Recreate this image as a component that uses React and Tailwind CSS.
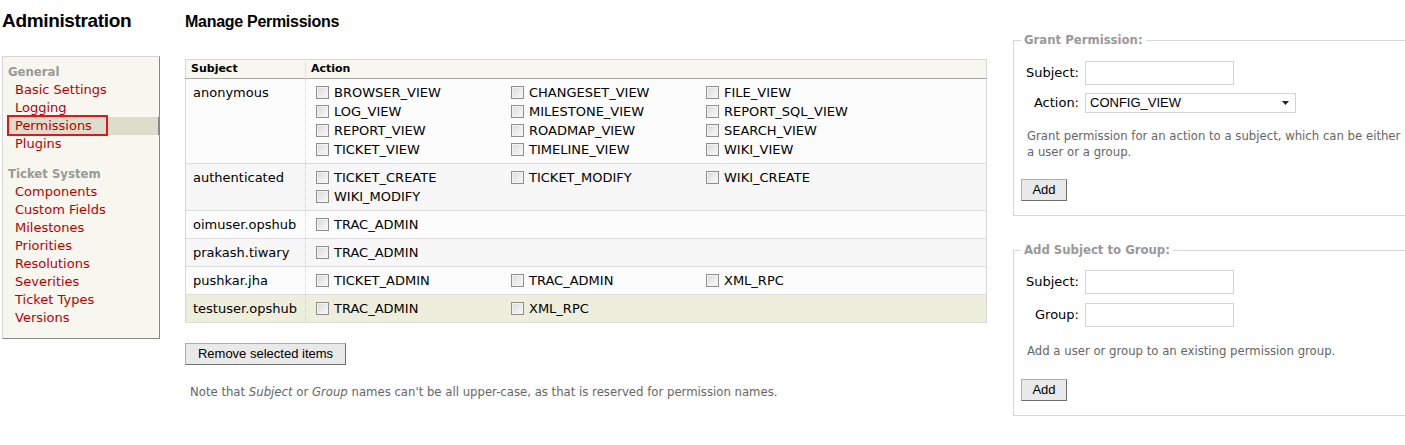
import React from "react";

const general = ["Basic Settings", "Logging", "Permissions", "Plugins"];
const ticketSystem = [
  "Components",
  "Custom Fields",
  "Milestones",
  "Priorities",
  "Resolutions",
  "Severities",
  "Ticket Types",
  "Versions",
];

const perms = [
  {
    subject: "anonymous",
    actions: [
      "BROWSER_VIEW",
      "CHANGESET_VIEW",
      "FILE_VIEW",
      "LOG_VIEW",
      "MILESTONE_VIEW",
      "REPORT_SQL_VIEW",
      "REPORT_VIEW",
      "ROADMAP_VIEW",
      "SEARCH_VIEW",
      "TICKET_VIEW",
      "TIMELINE_VIEW",
      "WIKI_VIEW",
    ],
    bg: "bg-[#fcfcfc]",
  },
  {
    subject: "authenticated",
    actions: ["TICKET_CREATE", "TICKET_MODIFY", "WIKI_CREATE", "WIKI_MODIFY"],
    bg: "bg-[#f7f7f7]",
  },
  { subject: "oimuser.opshub", actions: ["TRAC_ADMIN"], bg: "bg-[#fcfcfc]" },
  { subject: "prakash.tiwary", actions: ["TRAC_ADMIN"], bg: "bg-[#f7f7f7]" },
  {
    subject: "pushkar.jha",
    actions: ["TICKET_ADMIN", "TRAC_ADMIN", "XML_RPC"],
    bg: "bg-[#fcfcfc]",
  },
  {
    subject: "testuser.opshub",
    actions: ["TRAC_ADMIN", "XML_RPC"],
    bg: "bg-[#eeeedd]",
  },
];

const Checkbox = () => (
  <span className="inline-block w-[13px] h-[13px] shrink-0 border border-[#8f8f8f] bg-linear-to-br from-[#d9d9d9] to-[#fbfbfb] shadow-[inset_0_0_0_1px_#f2f2f2]" />
);

const Button = ({ children, className = "" }) => (
  <button
    className={`h-[22px] bg-[#e9e9e9] border border-[#adadad] border-r-[#707070] border-b-[#707070] font-['Liberation_Sans',Arial,sans-serif] text-[13px] leading-[20px] text-black ${className}`}
  >
    {children}
  </button>
);

const Label = ({ children }) => (
  <span className="w-[58px] text-right text-[13px] text-black">{children}</span>
);

const TextInput = () => (
  <div className="ml-[6px] w-[149px] h-[24px] border border-[#d4d4d4] bg-white" />
);

export default function App() {
  return (
    <div className="w-[1405px] h-[445px] overflow-hidden bg-white flex font-['DejaVu_Sans',Verdana,sans-serif] text-[13px] text-black">
      {/* left nav */}
      <div className="w-[185px] shrink-0">
        <h1 className="mt-[10px] pl-[2px] font-['Liberation_Sans',Arial,sans-serif] font-bold text-[19px] leading-[22px] tracking-[-0.018em]">
          Administration
        </h1>
        <div className="mt-[24px] ml-[2px] w-[158px] bg-[#f7f7f0] border border-[#d7d7d7] border-r-[#888] border-b-[#888] pt-[7px] pb-[11px] pl-[5px]">
          <div className="h-[17px] leading-[17px] text-[11.7px] font-bold text-[#999]">
            General
          </div>
          <ul>
            {general.map((item) => (
              <li
                key={item}
                className={`relative h-[18px] leading-[18px] pl-[7px] text-[#bb0000] ${
                  item === "Permissions" ? "bg-[#ddddcc] border-r border-[#888]" : ""
                }`}
              >
                {item}
                {item === "Permissions" && (
                  <span className="absolute -left-[1px] -top-[2px] w-[101px] h-[21px] border-2 border-[#e3141c]" />
                )}
              </li>
            ))}
          </ul>
          <div className="mt-[13px] h-[17px] leading-[17px] text-[11.7px] font-bold text-[#999]">
            Ticket System
          </div>
          <ul>
            {ticketSystem.map((item) => (
              <li key={item} className="h-[18px] leading-[18px] pl-[7px] text-[#bb0000]">
                {item}
              </li>
            ))}
          </ul>
        </div>
      </div>

      {/* main */}
      <div className="w-[802px] shrink-0">
        <h2 className="mt-[12px] font-['Liberation_Sans',Arial,sans-serif] font-bold text-[16px] leading-[19px] tracking-[-0.018em]">
          Manage Permissions
        </h2>
        <table className="mt-[28px] w-[802px] border-collapse border border-[#d7d7d7]">
          <thead>
            <tr className="bg-[#f7f7f0] border-b border-[#a8a8a8]">
              <th className="w-[120px] h-[19px] pl-[5px] text-left text-[11px] font-bold leading-[14px]">
                Subject
              </th>
              <th className="pl-[5px] text-left text-[11px] font-bold leading-[14px] border-l border-[#e2e2e2]">
                Action
              </th>
            </tr>
          </thead>
          <tbody>
            {perms.map((row) => (
              <tr key={row.subject} className={`${row.bg} border-b border-[#dddddd]`}>
                <td className="align-top py-[4px] pl-[7px] leading-[19px]">{row.subject}</td>
                <td className="align-top py-[4px] pl-[10px] leading-[19px] border-l border-dotted border-[#d0d0d0]">
                  <div className="flex flex-wrap">
                    {row.actions.map((a) => (
                      <div key={a} className="w-[195px] h-[19px] flex items-center gap-[5px]">
                        <Checkbox />
                        <span>{a}</span>
                      </div>
                    ))}
                  </div>
                </td>
              </tr>
            ))}
          </tbody>
        </table>
        <Button className="mt-[20px] w-[161px]">Remove selected items</Button>
        <p className="mt-[19px] ml-[5px] text-[11.7px] leading-[16px] text-[#666]">
          Note that <em>Subject</em> or <em>Group</em> names can't be all upper-case, as that is
          reserved for permission names.
        </p>
      </div>

      {/* right forms */}
      <div className="ml-[26px] pt-[32px] shrink-0">
        <fieldset className="w-[400px] border border-[#d7d7d7] px-[7px] pt-[12px] pb-[14px]">
          <legend className="px-[3px] text-[11.7px] leading-[16px] font-bold text-[#999]">
            Grant Permission:
          </legend>
          <div className="flex items-center h-[25px]">
            <Label>Subject:</Label>
            <TextInput />
          </div>
          <div className="flex items-center h-[21px] mt-[7px]">
            <Label>Action:</Label>
            <div className="ml-[6px] w-[211px] h-[20px] border border-[#d4d4d4] bg-white flex items-center justify-between pl-[4px] pr-[6px] font-['Liberation_Sans',Arial,sans-serif] text-[13px]">
              <span>CONFIG_VIEW</span>
              <svg width="7" height="4" viewBox="0 0 7 4">
                <path d="M0 0h7L3.5 4z" fill="#222" />
              </svg>
            </div>
          </div>
          <p className="mt-[15px] ml-[6px] text-[11.7px] leading-[16px] text-[#666] whitespace-nowrap">
            Grant permission for an action to a subject, which can be either
            <br />a user or a group.
          </p>
          <Button className="mt-[19px] w-[46px]">Add</Button>
        </fieldset>

        <fieldset className="mt-[26px] w-[400px] border border-[#d7d7d7] px-[7px] pt-[12px] pb-[14px]">
          <legend className="px-[3px] text-[11.7px] leading-[16px] font-bold text-[#999]">
            Add Subject to Group:
          </legend>
          <div className="flex items-center h-[24px]">
            <Label>Subject:</Label>
            <TextInput />
          </div>
          <div className="flex items-center h-[24px] mt-[9px]">
            <Label>Group:</Label>
            <TextInput />
          </div>
          <p className="mt-[16px] ml-[6px] text-[11.7px] leading-[16px] text-[#666]">
            Add a user or group to an existing permission group.
          </p>
          <Button className="mt-[20px] w-[46px]">Add</Button>
        </fieldset>
      </div>
    </div>
  );
}
